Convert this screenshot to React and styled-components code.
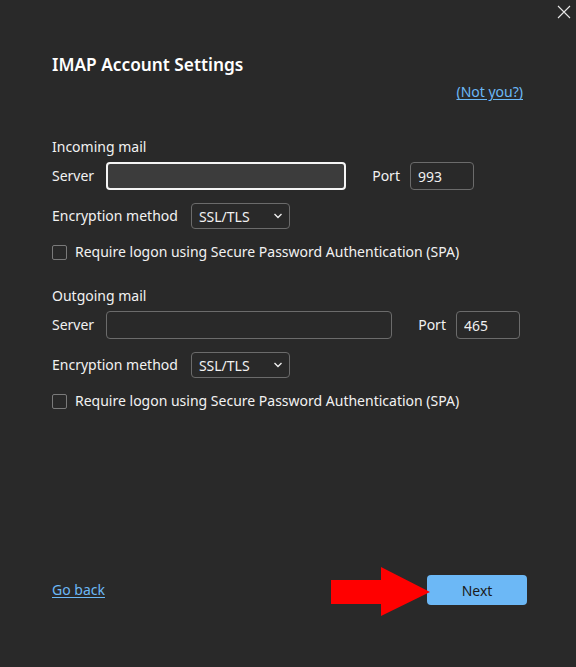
import styled, { createGlobalStyle } from "styled-components";

const GlobalStyle = createGlobalStyle`
  html, body {
    margin: 0;
    padding: 0;
    background: #292929;
  }
  body {
    font-family: "Noto Sans", "Open Sans", sans-serif;
    color: #f2f2f2;
  }
`;

const Window = styled.div`
  position: relative;
  width: 576px;
  height: 667px;
  box-sizing: border-box;
  padding: 0 49px 0 52px;
  display: flex;
  flex-direction: column;
  background: #292929;
`;

const CloseButton = styled.button`
  position: absolute;
  top: 5px;
  right: 5px;
  width: 14px;
  height: 14px;
  padding: 0;
  border: none;
  background: none;
  cursor: pointer;
  display: flex;
`;

const Title = styled.h1`
  margin: 52px 0 0;
  font-size: 17.3px;
  font-weight: 600;
  line-height: 26px;
  color: #ffffff;
`;

const NotYouRow = styled.div`
  display: flex;
  justify-content: flex-end;
  margin-top: 4px;
  padding-right: 4px;
`;

const Link = styled.a`
  font-size: 14px;
  line-height: 20px;
  color: #6cb8f6;
  text-decoration: underline;
  text-underline-offset: 2px;
  cursor: pointer;
`;

const Section = styled.section`
  display: flex;
  flex-direction: column;
  margin-top: ${(p) => p.$top}px;
`;

const SectionLabel = styled.div`
  font-size: 14px;
  line-height: 20px;
`;

const Row = styled.div`
  display: flex;
  align-items: center;
  margin-top: ${(p) => p.$top || 0}px;
`;

const Label = styled.span`
  font-size: 14px;
  line-height: 20px;
  margin-right: ${(p) => p.$gap}px;
  margin-left: ${(p) => p.$left || 0}px;
`;

const TextInput = styled.input`
  box-sizing: border-box;
  width: ${(p) => p.$width}px;
  height: 28px;
  padding: 0 7px;
  border-radius: 4px;
  font-family: inherit;
  font-size: 14px;
  color: #f0f0f0;
  outline: none;
  background: ${(p) => (p.$focused ? "#3c3c3c" : "#292929")};
  border: ${(p) => (p.$focused ? "2px solid #f5f5f5" : "1px solid #6b6b6b")};
`;

const Select = styled.div`
  box-sizing: border-box;
  width: 99px;
  height: 26px;
  padding: 0 6px 0 7px;
  border: 1px solid #6b6b6b;
  border-radius: 4px;
  display: flex;
  align-items: center;
  justify-content: space-between;
  font-size: 14px;
`;

const CheckRow = styled.label`
  display: flex;
  align-items: center;
  gap: 8px;
  font-size: 14px;
  line-height: 20px;
  margin-top: ${(p) => p.$top}px;
`;

const CheckBox = styled.span`
  box-sizing: border-box;
  width: 15px;
  height: 15px;
  border: 1px solid #7a7a7a;
  border-radius: 2px;
`;

const Footer = styled.div`
  margin-top: auto;
  margin-bottom: 62px;
  display: flex;
  align-items: center;
  justify-content: space-between;
`;

const ButtonWrap = styled.div`
  position: relative;
  display: flex;
`;

const NextButton = styled.button`
  width: 100px;
  height: 30px;
  border: none;
  border-radius: 4px;
  background: #6cb8f6;
  color: #1b1b1b;
  font-family: inherit;
  font-size: 14px;
  cursor: pointer;
`;

const Arrow = styled.svg`
  position: absolute;
  left: -96px;
  top: -8px;
`;

const Chevron = () => (
  <svg width="10" height="6" viewBox="0 0 10 6">
    <path d="M1.5 1l3.5 3.5L8.5 1" fill="none" stroke="#ededed" strokeWidth="1.4" />
  </svg>
);

const MailSection = ({ title, top, serverWidth, portGap, port, focused }) => (
  <Section $top={top}>
    <SectionLabel>{title}</SectionLabel>
    <Row $top={5}>
      <Label $gap={12}>Server</Label>
      <TextInput $width={serverWidth} $focused={focused} defaultValue="" />
      <Label $left={portGap} $gap={10}>
        Port
      </Label>
      <TextInput $width={64} defaultValue={port} />
    </Row>
    <Row $top={13}>
      <Label $gap={13}>Encryption method</Label>
      <Select>
        SSL/TLS
        <Chevron />
      </Select>
    </Row>
    <CheckRow $top={13}>
      <CheckBox />
      Require logon using Secure Password Authentication (SPA)
    </CheckRow>
  </Section>
);

export default function App() {
  return (
    <>
      <GlobalStyle />
      <Window>
        <CloseButton aria-label="Close">
          <svg width="14" height="14" viewBox="0 0 14 14">
            <path d="M1 1l12 12M13 1L1 13" stroke="#e8e8e8" strokeWidth="1.1" />
          </svg>
        </CloseButton>
        <Title>IMAP Account Settings</Title>
        <NotYouRow>
          <Link>(Not you?)</Link>
        </NotYouRow>
        <MailSection
          title="Incoming mail"
          top={35}
          serverWidth={240}
          portGap={26}
          port="993"
          focused
        />
        <MailSection
          title="Outgoing mail"
          top={24}
          serverWidth={286}
          portGap={26}
          port="465"
        />
        <Footer>
          <Link>Go back</Link>
          <ButtonWrap>
            <Arrow width="100" height="50" viewBox="0 0 100 50">
              <path d="M0 13H50V0L99 25L50 49V37H0Z" fill="#ff0000" />
            </Arrow>
            <NextButton>Next</NextButton>
          </ButtonWrap>
        </Footer>
      </Window>
    </>
  );
}
